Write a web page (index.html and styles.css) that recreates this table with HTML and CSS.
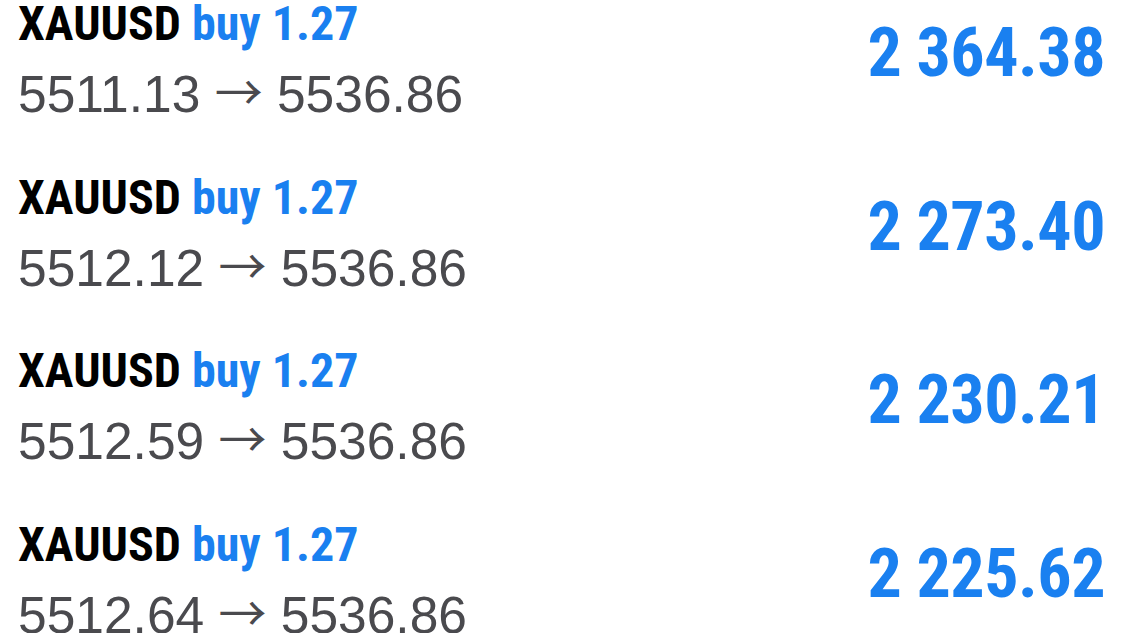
FILE: index.html
```html
<!DOCTYPE html>
<html lang="en">
<head>
  <meta charset="UTF-8">
  <title>Positions</title>
  <link rel="stylesheet" href="styles.css">
</head>
<body>
  <div class="list">
    <div class="row">
      <div class="info">
        <div class="title">XAUUSD <span class="side">buy 1.27</span></div>
        <div class="prices">5511.13 <span class="arrow">→</span> 5536.86</div>
      </div>
      <div class="profit">2 364.38</div>
    </div>
    <div class="row">
      <div class="info">
        <div class="title">XAUUSD <span class="side">buy 1.27</span></div>
        <div class="prices">5512.12 <span class="arrow">→</span> 5536.86</div>
      </div>
      <div class="profit">2 273.40</div>
    </div>
    <div class="row">
      <div class="info">
        <div class="title">XAUUSD <span class="side">buy 1.27</span></div>
        <div class="prices">5512.59 <span class="arrow">→</span> 5536.86</div>
      </div>
      <div class="profit">2 230.21</div>
    </div>
    <div class="row">
      <div class="info">
        <div class="title">XAUUSD <span class="side">buy 1.27</span></div>
        <div class="prices">5512.64 <span class="arrow">→</span> 5536.86</div>
      </div>
      <div class="profit">2 225.62</div>
    </div>
  </div>
</body>
</html>
```

FILE: styles.css
```css
body {
  margin: 0;
  background: #ffffff;
  overflow: hidden;
}

.list {
  display: flex;
  flex-direction: column;
  margin-top: -2px;
  padding: 0 20px 0 18px;
}

.row {
  display: flex;
  align-items: flex-start;
  justify-content: space-between;
  height: 173.5px;
}

.title {
  font-family: "Roboto Condensed", Roboto, sans-serif;
  font-stretch: condensed;
  font-weight: bold;
  font-size: 48px;
  line-height: 52px;
  color: #000000;
}

.side {
  color: #1a80f0;
}

.prices {
  margin-top: 7px;
  font-family: "Liberation Sans", Arial, sans-serif;
  font-size: 51.5px;
  line-height: 64px;
  color: #4a4a4e;
}

.arrow {
  font-family: "Noto Sans CJK SC", sans-serif;
  font-size: 48px;
  vertical-align: 2px;
}

.profit {
  margin-top: 21px;
  font-family: "Roboto Condensed", Roboto, sans-serif;
  font-stretch: condensed;
  font-weight: bold;
  font-size: 68px;
  line-height: 1;
  letter-spacing: -0.5px;
  color: #1a80f0;
}
```
